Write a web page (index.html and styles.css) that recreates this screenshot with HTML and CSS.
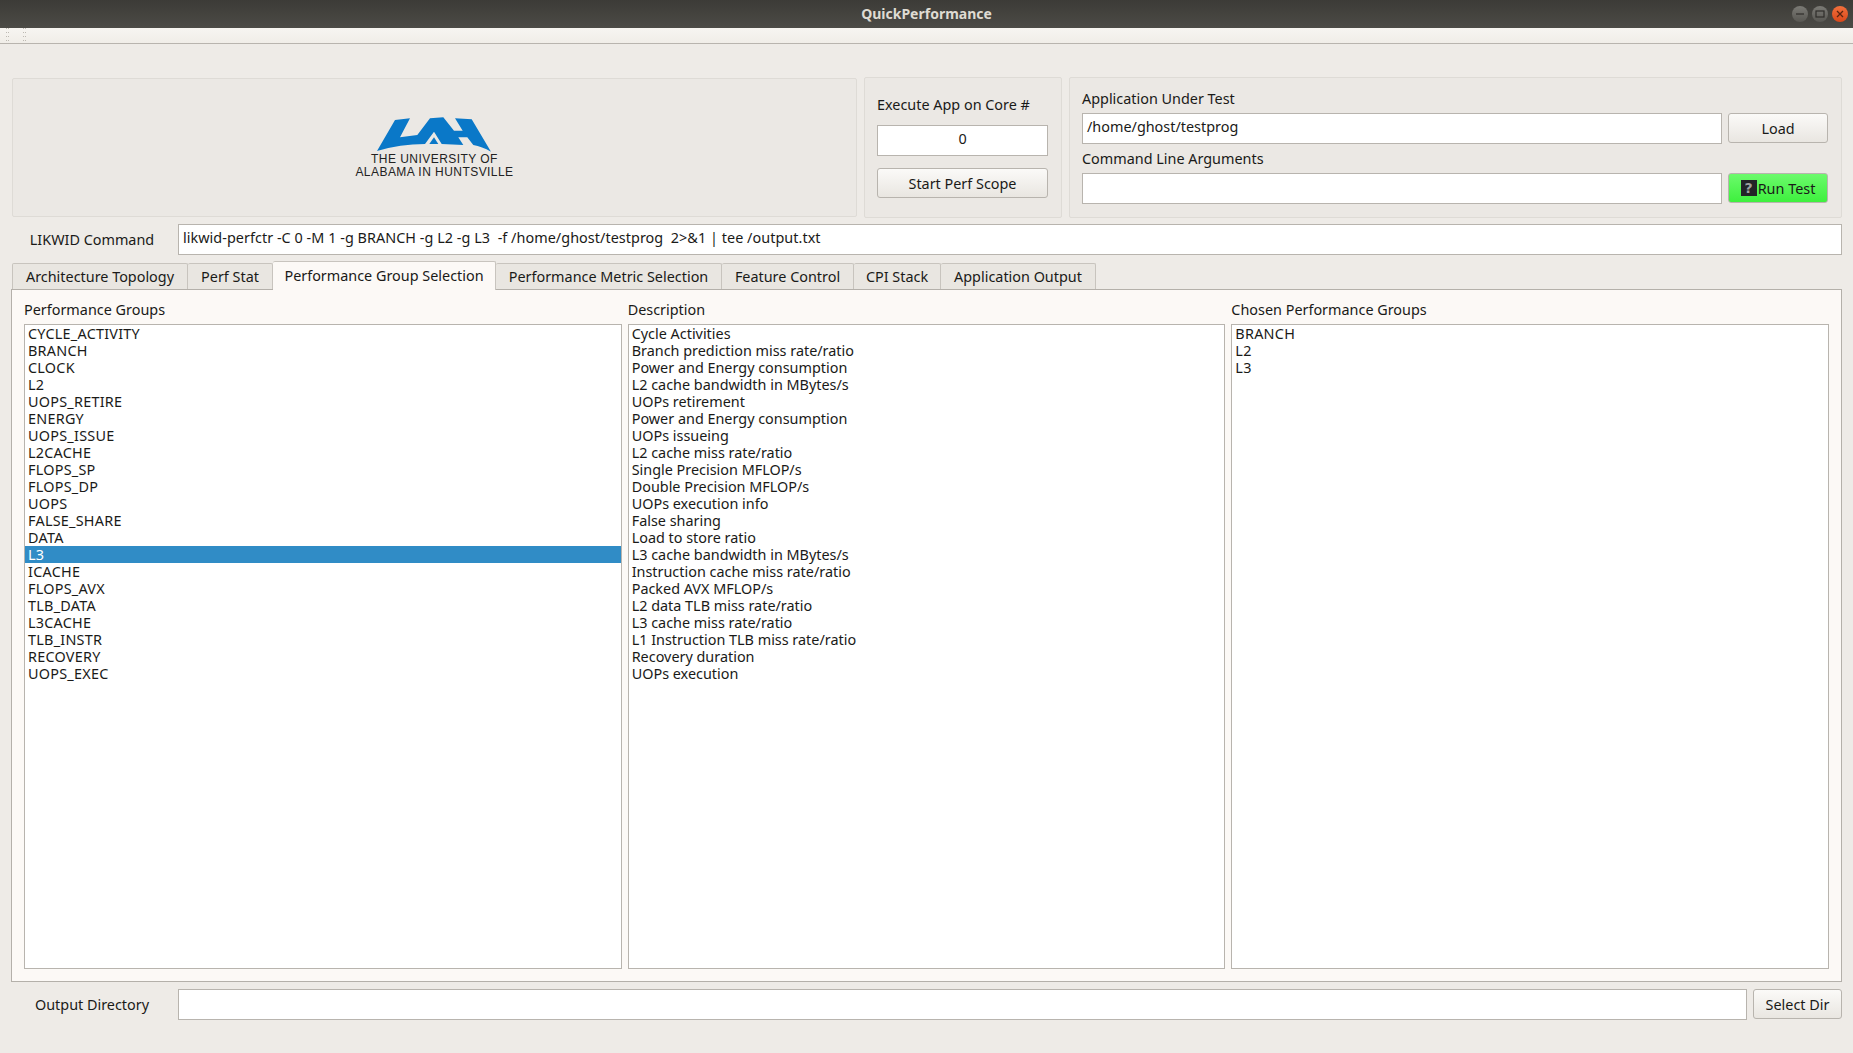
FILE: index.html
```html
<!DOCTYPE html>
<html lang="en">
<head>
  <meta charset="UTF-8">
  <meta name="viewport" content="width=device-width, initial-scale=1.0">
  <title>QuickPerformance</title>
  <link rel="stylesheet" href="styles.css">
</head>
<body>
  <header class="titlebar">
    <span class="title">QuickPerformance</span>
    <div class="winbtns">
      <span class="winbtn"><svg width="10" height="10" viewBox="0 0 10 10"><path d="M1 5h8" stroke="#2f2e2a" stroke-width="1.2"/></svg></span>
      <span class="winbtn"><svg width="10" height="10" viewBox="0 0 10 10"><rect x="1" y="2" width="8" height="6" fill="none" stroke="#2f2e2a" stroke-width="1.2"/></svg></span>
      <span class="winbtn close"><svg width="10" height="10" viewBox="0 0 10 10"><path d="M2 2l6 6M8 2l-6 6" stroke="#5a2410" stroke-width="1.3"/></svg></span>
    </div>
  </header>
  <div class="menubar"><i class="grip"></i><i class="grip"></i></div>

  <main class="content">
    <section class="top">
      <div class="box logo-box">
        <svg class="logo" width="115" height="36" viewBox="0 0 115 36">
          <path fill="#0a78c8" d="M0 35 L18 4 L33 2.3 L23 21.3 L40.3 19 L53 2.3 L66.3 1.3 L77 14.7 L85.7 14.7 L78 2.3 L94.7 3.3 L114 35.7 Q105 30.5 96.3 29 L90.3 21.3 L81.3 21.3 L86.3 29 L64.7 28 L57 15.7 L48 28 Q23 28 0 35 Z"/>
          <path fill="#0a78c8" d="M57 21.3 L52.3 28 L61.3 28 Z"/>
        </svg>
        <div class="logo-text">THE UNIVERSITY OF<br>ALABAMA IN HUNTSVILLE</div>
      </div>
      <div class="box core-box">
        <label>Execute App on Core #</label>
        <div class="input center">0</div>
        <button class="btn">Start Perf Scope</button>
      </div>
      <div class="box app-box">
        <label>Application Under Test</label>
        <div class="row">
          <div class="input grow">/home/ghost/testprog</div>
          <button class="btn side">Load</button>
        </div>
        <label>Command Line Arguments</label>
        <div class="row">
          <div class="input grow"></div>
          <button class="btn side run"><span class="qicon">?</span>Run Test</button>
        </div>
      </div>
    </section>

    <section class="row cmd-row">
      <span class="side-label">LIKWID Command</span>
      <div class="input grow cmd">likwid-perfctr -C 0 -M 1 -g BRANCH -g L2 -g L3&nbsp; -f /home/ghost/testprog&nbsp; 2&gt;&amp;1 | tee /output.txt</div>
    </section>

    <nav class="tabs">
      <span class="tab t1">Architecture Topology</span>
      <span class="tab t2">Perf Stat</span>
      <span class="tab t3 active">Performance Group Selection</span>
      <span class="tab t4">Performance Metric Selection</span>
      <span class="tab t5">Feature Control</span>
      <span class="tab t6">CPI Stack</span>
      <span class="tab t7">Application Output</span>
    </nav>

    <section class="pane">
      <div class="col names">
        <h2>Performance Groups</h2>
        <ul class="list">
          <li>CYCLE_ACTIVITY</li>
          <li>BRANCH</li>
          <li>CLOCK</li>
          <li>L2</li>
          <li>UOPS_RETIRE</li>
          <li>ENERGY</li>
          <li>UOPS_ISSUE</li>
          <li>L2CACHE</li>
          <li>FLOPS_SP</li>
          <li>FLOPS_DP</li>
          <li>UOPS</li>
          <li>FALSE_SHARE</li>
          <li>DATA</li>
          <li class="selected">L3</li>
          <li>ICACHE</li>
          <li>FLOPS_AVX</li>
          <li>TLB_DATA</li>
          <li>L3CACHE</li>
          <li>TLB_INSTR</li>
          <li>RECOVERY</li>
          <li>UOPS_EXEC</li>
        </ul>
      </div>
      <div class="col">
        <h2>Description</h2>
        <ul class="list">
          <li>Cycle Activities</li>
          <li>Branch prediction miss rate/ratio</li>
          <li>Power and Energy consumption</li>
          <li>L2 cache bandwidth in MBytes/s</li>
          <li>UOPs retirement</li>
          <li>Power and Energy consumption</li>
          <li>UOPs issueing</li>
          <li>L2 cache miss rate/ratio</li>
          <li>Single Precision MFLOP/s</li>
          <li>Double Precision MFLOP/s</li>
          <li>UOPs execution info</li>
          <li>False sharing</li>
          <li>Load to store ratio</li>
          <li>L3 cache bandwidth in MBytes/s</li>
          <li>Instruction cache miss rate/ratio</li>
          <li>Packed AVX MFLOP/s</li>
          <li>L2 data TLB miss rate/ratio</li>
          <li>L3 cache miss rate/ratio</li>
          <li>L1 Instruction TLB miss rate/ratio</li>
          <li>Recovery duration</li>
          <li>UOPs execution</li>
        </ul>
      </div>
      <div class="col names">
        <h2>Chosen Performance Groups</h2>
        <ul class="list">
          <li>BRANCH</li>
          <li>L2</li>
          <li>L3</li>
        </ul>
      </div>
    </section>

    <section class="row out-row">
      <span class="side-label">Output Directory</span>
      <div class="input grow"></div>
      <button class="btn dir">Select Dir</button>
    </section>
  </main>
</body>
</html>
```

FILE: styles.css
```css
* {
  box-sizing: border-box;
}
html, body {
  height: 100%;
}
body {
  margin: 0;
  background: #eeebe7;
  color: #1a1a18;
  font-family: "Noto Sans", sans-serif;
  font-size: 14.4px;
  overflow: hidden;
}

/* window chrome */
.titlebar {
  height: 28px;
  padding-bottom: 1px;
  background: linear-gradient(#3c3b37, #4c4b46);
  display: flex;
  align-items: center;
  justify-content: center;
  position: relative;
}
.title {
  color: #dfdbd2;
  font-weight: 700;
  font-size: 14px;
}
.winbtns {
  position: absolute;
  right: 5px;
  top: 6px;
  display: flex;
  gap: 4px;
}
.winbtn {
  width: 16px;
  height: 16px;
  border-radius: 50%;
  background: linear-gradient(#7b7a75, #585752);
  display: flex;
  align-items: center;
  justify-content: center;
}
.winbtn.close {
  background: linear-gradient(#f2703c, #d9481a);
}
.menubar {
  height: 16px;
  background: linear-gradient(#f7f5f1, #f0ede8);
  border-bottom: 1px solid #b8b4ae;
  display: flex;
  gap: 14px;
  padding-left: 6px;
}
.grip {
  width: 3px;
  height: 16px;
  background:
    repeating-linear-gradient(#bdb9b2 0 1px, transparent 1px 4px) left / 1px 100% no-repeat,
    repeating-linear-gradient(#bdb9b2 0 1px, transparent 1px 4px) right / 1px 100% no-repeat;
}

/* main area */
.content {
  padding: 33px 11px 0 12px;
}
.top {
  display: flex;
  gap: 7px;
  height: 141px;
}
.box {
  background: #ebe8e4;
  border: 1px solid #dedbd6;
  border-radius: 2px;
}
.logo-box {
  width: 845px;
  margin: 1px 0;
  display: flex;
  flex-direction: column;
  align-items: center;
  padding-top: 37px;
}
.logo-text {
  font-family: "Liberation Sans", sans-serif;
  font-size: 12px;
  line-height: 13px;
  margin-top: 1px;
  text-align: center;
  letter-spacing: 0.45px;
  color: #222;
}
.core-box {
  width: 198px;
  padding: 17px 13px 0 12px;
  display: flex;
  flex-direction: column;
}
.core-box label {
  height: 19px;
  line-height: 19px;
  margin-bottom: 11px;
}
.core-box .btn {
  margin-top: 12px;
  height: 30px;
}
.app-box {
  flex: 1;
  padding: 11px 13px 0 12px;
  display: flex;
  flex-direction: column;
}
.app-box label {
  height: 19px;
  line-height: 19px;
}
.app-box label:first-child {
  margin-bottom: 5px;
}
.app-box label:nth-child(3) {
  margin: 6px 0 4px;
  line-height: 17px;
}
.row {
  display: flex;
  gap: 6px;
}
.input {
  background: #fff;
  border: 1px solid #b8b4ae;
  height: 31px;
  line-height: 26px;
  padding: 0 4px;
  white-space: pre;
}
.input.center {
  text-align: center;
}
.grow {
  flex: 1;
}
.btn {
  font: inherit;
  color: inherit;
  height: 30px;
  padding: 0;
  border: 1px solid #b8b4ae;
  border-radius: 3px;
  background: linear-gradient(#fbfaf8, #e9e6e1);
}
.btn.side {
  width: 100px;
}
.btn.run {
  background: linear-gradient(#6cfa6c, #3ef03e);
  display: flex;
  align-items: center;
  justify-content: center;
}
.qicon {
  flex: none;
  width: 16px;
  height: 16px;
  line-height: 16px;
  background: #232327;
  color: #a0a0a0;
  font-family: "DejaVu Sans", sans-serif;
  font-weight: 700;
  font-size: 14px;
  text-align: center;
  margin-right: 1px;
}

.cmd-row {
  margin-top: 6px;
  gap: 0;
  align-items: center;
}
.side-label {
  width: 166px;
  padding-right: 6px;
  text-align: center;
}
.cmd {
  line-height: 25px;
  letter-spacing: 0.045px;
}

/* tabs */
.tabs {
  display: flex;
  height: 28px;
  margin-top: 6px;
  align-items: flex-end;
}
.tab {
  height: 26px;
  line-height: 26px;
  text-align: center;
  background: #e9e6e1;
  border: 1px solid #c8c4be;
  border-bottom: 0;
  border-left: 0;
  border-radius: 2px 2px 0 0;
}
.tab.t1 { width: 176px; border-left: 1px solid #c8c4be; }
.tab.t2 { width: 85px; }
.tab.t3 { width: 223px; }
.tab.t4 { width: 226px; }
.tab.t5 { width: 132px; }
.tab.t6 { width: 87px; }
.tab.t7 { width: 155px; }
.tab.active {
  height: 29px;
  line-height: 27px;
  background: #fcf9f6;
  position: relative;
  margin-bottom: -1px;
}

.pane {
  margin-left: -1px;
  height: 693px;
  background: #fcf9f6;
  border: 1px solid #b4b0aa;
  padding: 0 12px 12px 12px;
  display: flex;
  gap: 6px;
}
.col {
  flex: 1;
  min-width: 0;
  display: flex;
  flex-direction: column;
}
.col h2 {
  font-size: inherit;
  font-weight: 400;
  margin: 0;
  height: 34px;
  line-height: 40px;
}
.list {
  list-style: none;
  margin: 0;
  padding: 0;
  flex: 1;
  background: #fff;
  border: 1px solid #b8b4ae;
}
.list li {
  height: 17px;
  line-height: 17px;
  padding-left: 3px;
}
.names .list li {
  letter-spacing: 0.25px;
}
.list li.selected {
  background: #308cc6;
  color: #fff;
}

.out-row {
  margin-top: 7px;
  align-items: flex-start;
  gap: 0;
}
.out-row .side-label {
  line-height: 31px;
}
.btn.dir {
  width: 89px;
  margin-left: 6px;
}
```
